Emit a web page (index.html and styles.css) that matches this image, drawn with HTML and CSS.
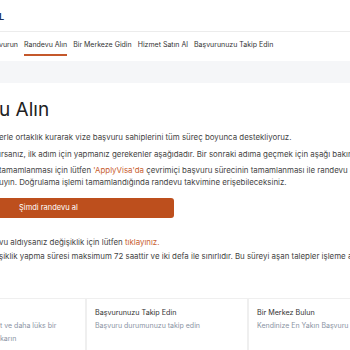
FILE: index.html
```html
<!DOCTYPE html>
<html lang="tr">
<head>
    <meta charset="UTF-8">
    <meta name="viewport" content="width=device-width, initial-scale=1.0">
    <title>Randevu Alın</title>
    <link rel="stylesheet" href="styles.css">
</head>
<body>

    <div class="header">
        <span class="logo">L</span>
    </div>

    <div class="nav">
        <a href="#">vurun</a>
        <a href="#" class="active">Randevu Alın</a>
        <a href="#">Bir Merkeze Gidin</a>
        <a href="#">Hizmet Satın Al</a>
        <a href="#">Başvurunuzu Takip Edin</a>
    </div>

    <div class="crumbs">ı</div>

    <div class="mainContent">
        <h1>u Alın</h1>
        <p>erle ortaklık kurarak vize başvuru sahiplerini tüm süreç boyunca destekliyoruz.</p>
        <p>ırsanız, ilk adım için yapmanız gerekenler aşağıdadır. Bir sonraki adıma geçmek için aşağı bakınız.</p>
        <p>tamamlanması için lütfen <a href="#">'ApplyVisa'da</a> çevrimiçi başvuru sürecinin tamamlanması ile randevu alabilirsiniz.<br>uyın. Doğrulama işlemi tamamlandığında randevu takvimine erişebileceksiniz.</p>

        <a href="#" class="bookButton">Şimdi randevu al</a>

        <p class="note">vu aldıysanız değişiklik için lütfen <a href="#">tıklayınız.</a></p>
        <p class="note">şiklik yapma süresi maksimum 72 saattir ve iki defa ile sınırlıdır. Bu süreyi aşan talepler işleme alınmaz.</p>
    </div>

    <div class="cards">
        <div class="card first">
            <h3>Ek Hizmetler</h3>
            <p>t ve daha lüks bir<br>karın</p>
        </div>
        <div class="card">
            <h3>Başvurunuzu Takip Edin</h3>
            <p>Başvuru durumunuzu takip edin</p>
        </div>
        <div class="card">
            <h3>Bir Merkez Bulun</h3>
            <p>Kendinize En Yakın Başvuru Merkezini Bulun</p>
        </div>
    </div>

</body>
</html>
```

FILE: styles.css
```css
body {
    margin: 0;
    font-family: Inter, "Noto Sans", sans-serif;
    background-color: white;
    color: #333;
    overflow: hidden;
    width: 350px;
    height: 350px;
}

.header {
    height: 32px;
    border-bottom: 1px solid #ececec;
    box-sizing: border-box;
}

.logo {
    display: block;
    margin-left: -1px;
    padding-top: 11px;
    font-size: 9px;
    font-weight: 700;
    color: #1c2f5c;
}

/* Menu */
.nav {
    display: flex;
    gap: 6px;
    height: 29px;
    white-space: nowrap;
    margin-left: -1px;
}

.nav a {
    display: flex;
    align-items: center;
    text-decoration: none;
    color: #333;
    font-size: 7px;
    height: 20px;
    padding-top: 2px;
    border-bottom: 2px solid transparent;
}

.nav a.active {
    border-bottom-color: #c4582b;
}

.crumbs {
    background-color: #f5f6f8;
    height: 22px;
    font-size: 7.5px;
    line-height: 22px;
    color: #555;
    margin-left: -2px;
}

/* Content */
.mainContent {
    white-space: nowrap;
    margin-left: -1px;
}

h1 {
    margin: 12px 0 7px;
    font-size: 19px;
    font-weight: 400;
    color: #222;
    line-height: 30px;
}

.mainContent p {
    margin: 0 0 5px;
    font-size: 7.9px;
    line-height: 11.5px;
    color: #444;
}

.mainContent p a {
    color: #c8602f;
    text-decoration: none;
}

.bookButton {
    display: block;
    width: 155px;
    height: 20px;
    margin: 10px 0 19px -1px;
    padding-left: 21px;
    background-color: #bd4f1d;
    border-radius: 3px;
    color: white;
    font-size: 7.5px;
    line-height: 20px;
    text-decoration: none;
}

.mainContent .note {
    margin-bottom: 2px;
}

/* Cards */
.cards {
    display: grid;
    grid-template-columns: 162px 162px 162px;
    margin: 36px 0 0 -76px;
}

.card {
    border: 1px solid #efefef;
    padding: 8px 8px;
    height: 60px;
    white-space: nowrap;
}

.card h3 {
    margin: 0;
    font-size: 7.2px;
    font-weight: 400;
    color: #333;
    line-height: 12px;
}

.card p {
    margin: 0;
    font-size: 7px;
    line-height: 13px;
    color: #8a93a3;
}

.card.first p {
    padding-left: 67px;
}
```
